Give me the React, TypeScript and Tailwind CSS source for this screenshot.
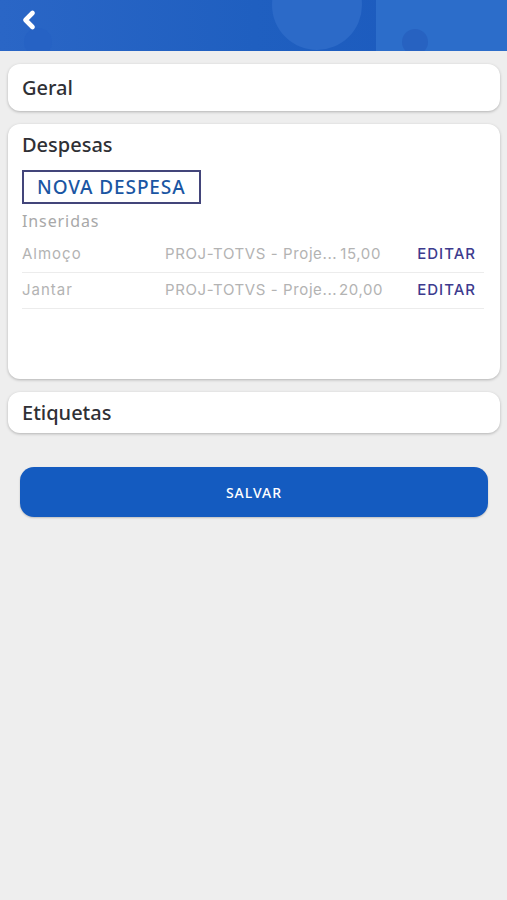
import { ChevronLeft } from "lucide-react";

type Expense = {
  name: string;
  project: string;
  value: string;
};

const expenses: Expense[] = [
  { name: "Almoço", project: "PROJ-TOTVS - Proje...", value: "15,00" },
  { name: "Jantar", project: "PROJ-TOTVS - Proje...", value: "20,00" },
];

function Header() {
  return (
    <div className="relative h-[51px] overflow-hidden bg-gradient-to-r from-[#2a66c6] via-[#1f5fc0] to-[#1b59bd]">
      <div className="absolute left-[272px] top-[-40px] size-[90px] rounded-full bg-[#2c6ac8]" />
      <div className="absolute left-[376px] top-0 h-full w-[131px] bg-[#2c6dca]" />
      <div className="absolute left-[402px] top-[29px] size-[26px] rounded-full bg-[#2762c1]" />
      <div className="absolute left-[24px] top-[28px] size-[28px] rounded-full bg-[#2662c4]" />
      <button className="relative flex items-start pl-[15px] pt-[6px] text-white">
        <ChevronLeft size={28} strokeWidth={4} />
      </button>
    </div>
  );
}

function Card({ title, height }: { title: string; height: string }) {
  return (
    <div className={`flex items-center rounded-[12px] bg-white px-[14px] shadow-[0_1px_3px_rgba(0,0,0,0.25)] ${height}`}>
      <div className="text-[20px] font-medium text-[#2f3035]">{title}</div>
    </div>
  );
}

export default function App() {
  return (
    <div className="min-h-[900px] bg-[#eeeeee] font-['Noto_Sans',sans-serif]">
      <Header />
      <div className="flex flex-col gap-[13px] px-[8px] pt-[13px] pr-[7px]">
        <Card title="Geral" height="h-[47px]" />
        <div className="h-[255px] rounded-[12px] bg-white px-[14px] shadow-[0_1px_3px_rgba(0,0,0,0.25)]">
          <div className="flex h-[40px] items-center pt-[1px] text-[20px] font-medium text-[#2f3035]">
            Despesas
          </div>
          <button className="mt-[6px] flex h-[34px] items-center border-2 border-[#43457a] px-[13px] text-[19px] font-medium tracking-[0.9px] text-[#1a56a3]">
            NOVA DESPESA
          </button>
          <div className="mt-[5px] text-[16px] tracking-[0.9px] text-[#a8a8a8]">Inseridas</div>
          <div className="mt-[4px] pr-[2px] font-['Inter',sans-serif]">
            {expenses.map((e) => (
              <div
                key={e.name}
                className="flex h-[36px] items-center border-b border-[#ececec] text-[15px] tracking-[0.6px] text-[#b3b3b3]"
              >
                <span className="w-[143px] tracking-[1px]">{e.name}</span>
                <span className="w-[174px] whitespace-nowrap">{e.project}</span>
                <span className="w-[42px] text-right">{e.value}</span>
                <span className="ml-auto pr-[8px] text-[15px] font-medium tracking-[1px] text-[#3d3b8e]">
                  EDITAR
                </span>
              </div>
            ))}
          </div>
        </div>
        <Card title="Etiquetas" height="h-[41px]" />
      </div>
      <div className="px-[20px] pt-[34px] pr-[19px]">
        <button className="flex h-[50px] w-full items-center justify-center rounded-[14px] bg-[#145bc0] text-[14px] font-medium tracking-[1px] text-white shadow-[0_1px_2px_rgba(0,0,0,0.2)]">
          SALVAR
        </button>
      </div>
    </div>
  );
}
